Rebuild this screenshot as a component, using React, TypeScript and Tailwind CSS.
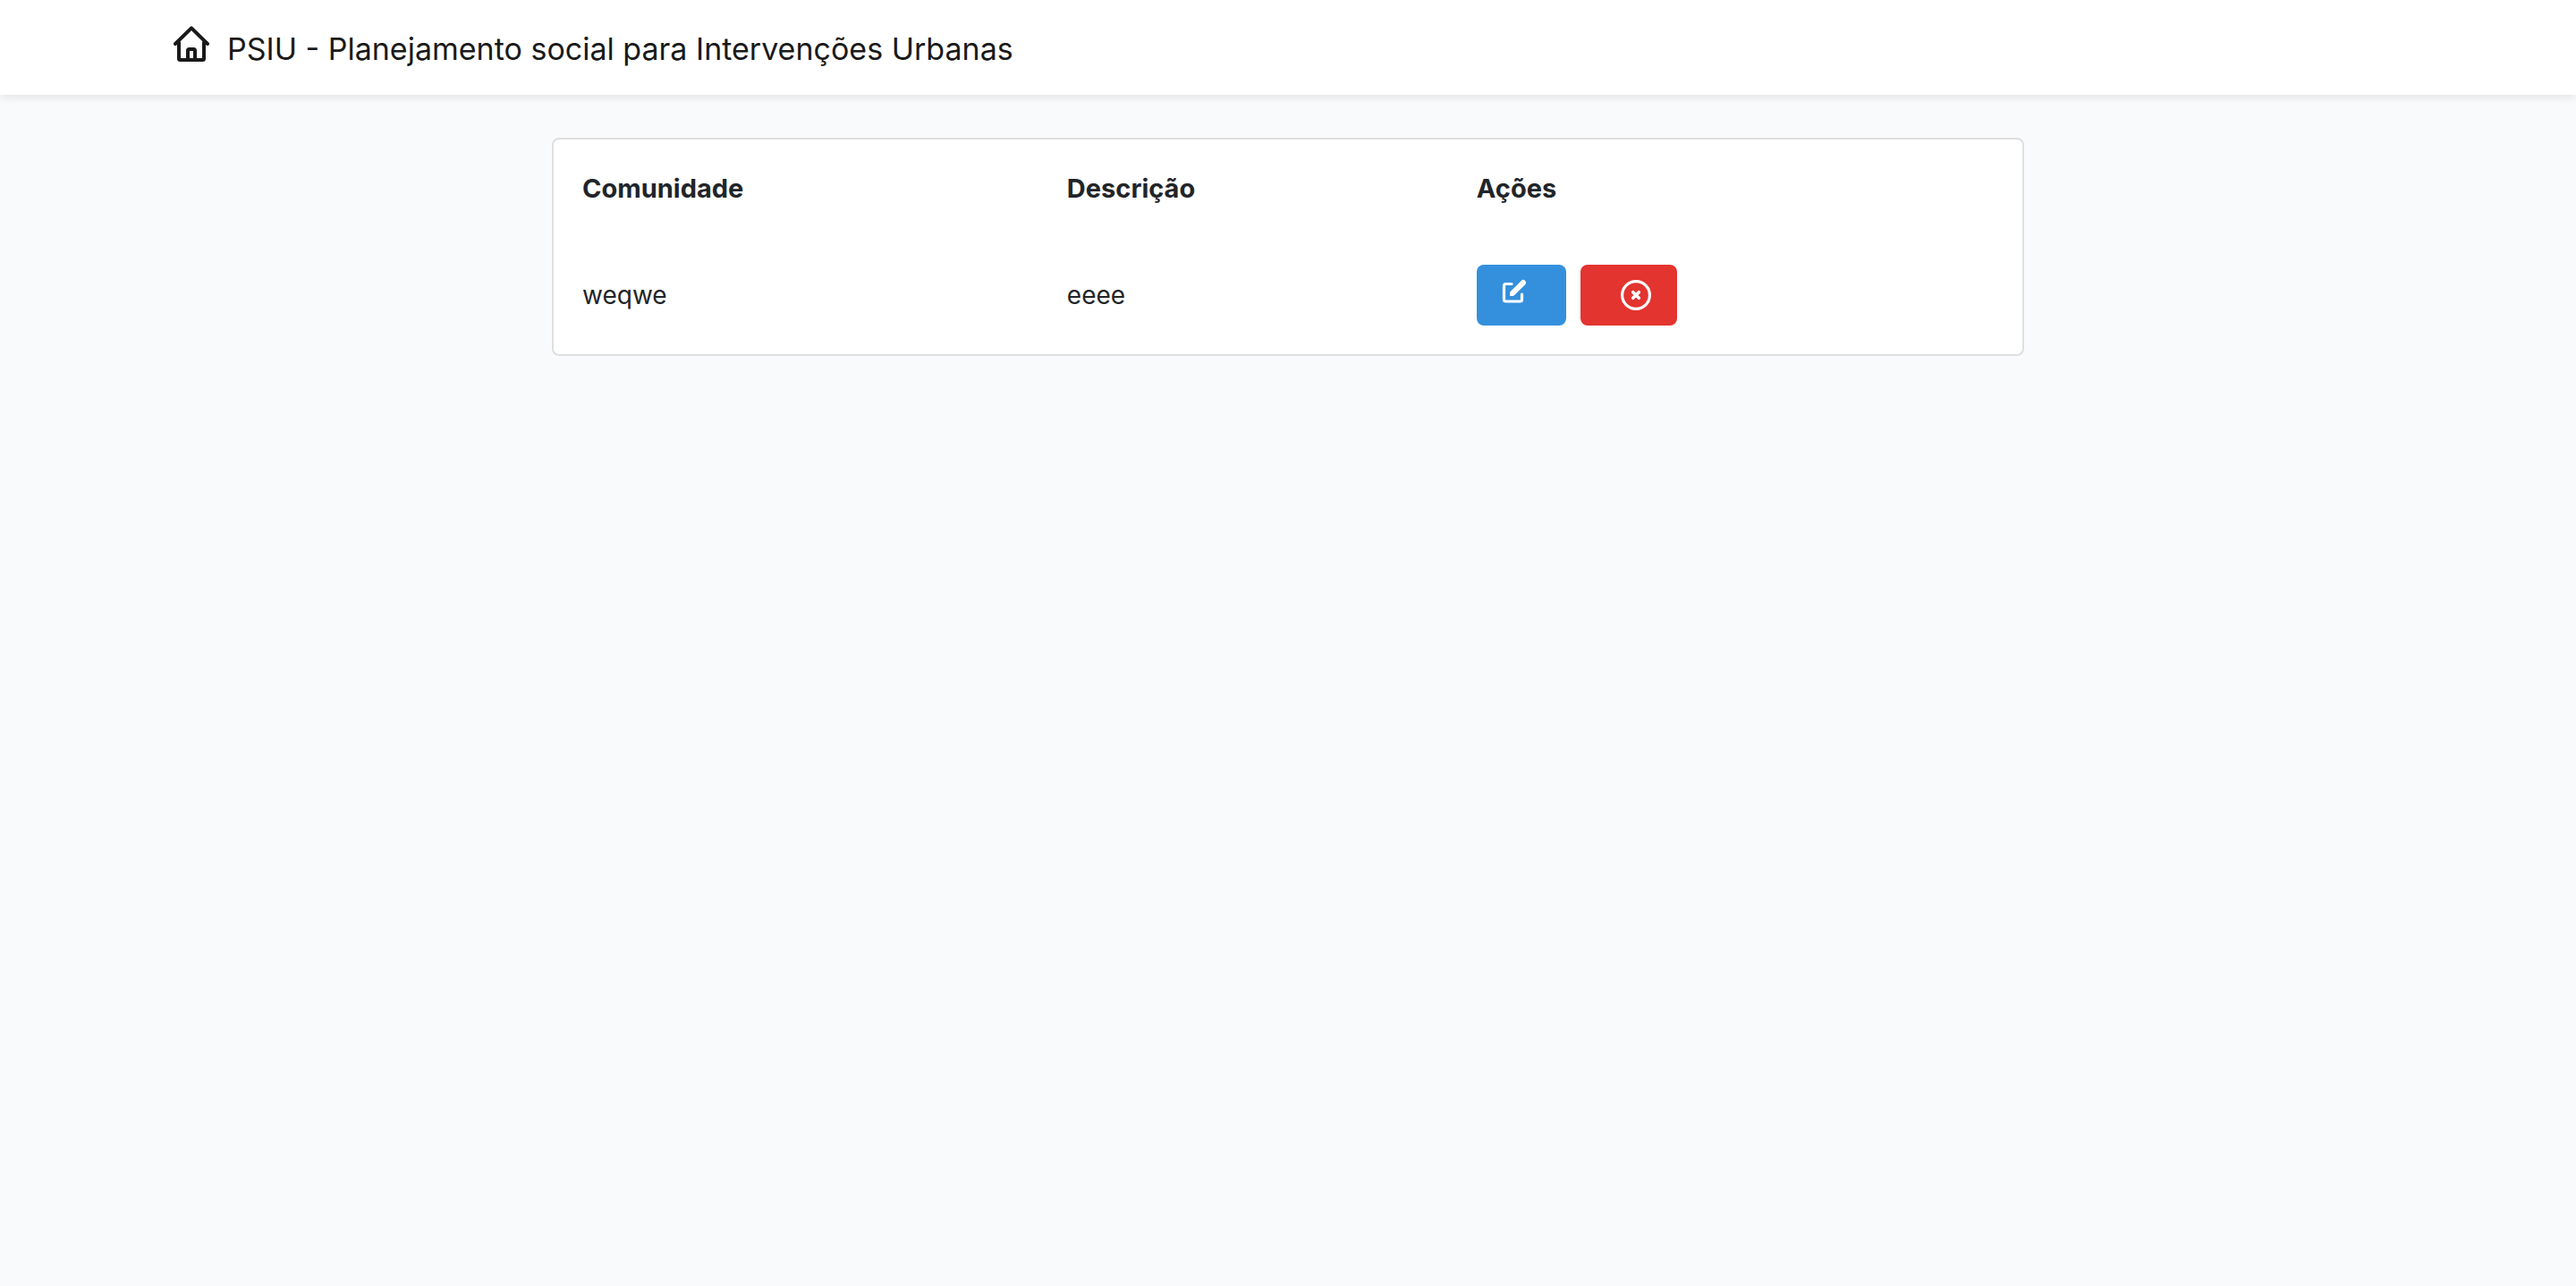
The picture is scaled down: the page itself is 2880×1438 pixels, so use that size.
import React from "react";

type Community = { id: number; name: string; description: string };

const communities: Community[] = [{ id: 1, name: "weqwe", description: "eeee" }];

function HomeIcon() {
  return (
    <svg
      className="size-10 shrink-0"
      viewBox="0 0 40 40"
      fill="none"
      stroke="currentColor"
      strokeWidth="4"
      strokeLinecap="round"
      strokeLinejoin="round"
      aria-hidden="true"
    >
      <path d="M2 20 L20 2.4 L38 20" />
      <path d="M6 18.5 V36.5 Q6 38 7.5 38 H32.5 Q34 38 34 36.5 V18.5" />
      <path d="M16 38 V27.5 Q16 26 17.5 26 H22.5 Q24 26 24 27.5 V38" />
    </svg>
  );
}

function EditIcon() {
  return (
    <svg className="size-7" viewBox="0 0 28 28" fill="none" aria-hidden="true">
      <path
        d="M11 5.500 H4.500 Q2.500 5.500 2.500 7.500 V23 Q2.500 25 4.500 25 H20.500 Q22.500 25 22.500 23 V17"
        stroke="currentColor"
        strokeWidth="3.200"
        strokeLinecap="round"
        strokeLinejoin="round"
      />
      <path
        d="M21.800 1.900 A3 3 0 0 1 26.100 6.200 L14.200 18.100 Q13.400 18.900 12.400 18.900 H10 Q9 18.900 9 17.900 V15.600 Q9 14.700 9.700 14 Z"
        fill="currentColor"
      />
    </svg>
  );
}

function RemoveIcon() {
  return (
    <svg
      className="size-[34px]"
      viewBox="0 0 34 34"
      fill="none"
      stroke="currentColor"
      strokeLinecap="round"
      aria-hidden="true"
    >
      <circle cx="17" cy="17" r="15.4" strokeWidth="3.2" />
      <path d="M13.7 13.7 L20.3 20.3 M20.3 13.7 L13.7 20.3" strokeWidth="3.600" />
    </svg>
  );
}

export default function App() {
  return (
    <div className="min-h-screen bg-[#f8fafc] font-['Inter',sans-serif] text-[28px] leading-[44px] text-[#212529]">
      <header className="relative bg-white shadow-[0_4px_8px_rgba(0,0,0,0.08)]">
        <nav className="mx-auto flex h-[106px] max-w-[2500px] items-center px-1">
          <a href="#" className="flex items-center gap-5 text-[34px] text-[#1a1a1a]">
            <span className="pb-2">
              <HomeIcon />
            </span>
            <span className="pt-1">PSIU - Planejamento social para Intervenções Urbanas</span>
          </a>
        </nav>
      </header>

      <main className="px-8 py-12">
        <div className="mx-auto max-w-[1646px] overflow-hidden rounded-lg border-2 border-[#dfdfdf] bg-white">
          <table className="w-full table-fixed text-left">
            <colgroup>
              <col className="w-[33%]" />
              <col className="w-[458px]" />
              <col />
            </colgroup>
            <thead className="text-[29px]">
              <tr>
                <th scope="col" className="px-8 pt-[33px] pb-[31px] font-bold">Comunidade</th>
                <th scope="col" className="px-8 pt-[33px] pb-[31px] font-bold">Descrição</th>
                <th scope="col" className="px-8 pt-[33px] pb-[31px] font-bold">Ações</th>
              </tr>
            </thead>
            <tbody>
              {communities.map((community) => (
                <tr key={community.id}>
                  <td className="p-8">{community.name}</td>
                  <td className="p-8">{community.description}</td>
                  <td className="p-8">
                    <div className="flex gap-4">
                      <button
                        type="button"
                        aria-label="Editar"
                        className="flex h-[68px] w-[100px] items-start rounded-lg bg-[#3490dc] pt-4 pl-7 text-white"
                      >
                        <EditIcon />
                      </button>
                      <button
                        type="button"
                        aria-label="Excluir"
                        className="flex h-[68px] w-[108px] items-center rounded-lg bg-[#e3342f] pl-[45px] text-white"
                      >
                        <RemoveIcon />
                      </button>
                    </div>
                  </td>
                </tr>
              ))}
            </tbody>
          </table>
        </div>
      </main>
    </div>
  );
}
